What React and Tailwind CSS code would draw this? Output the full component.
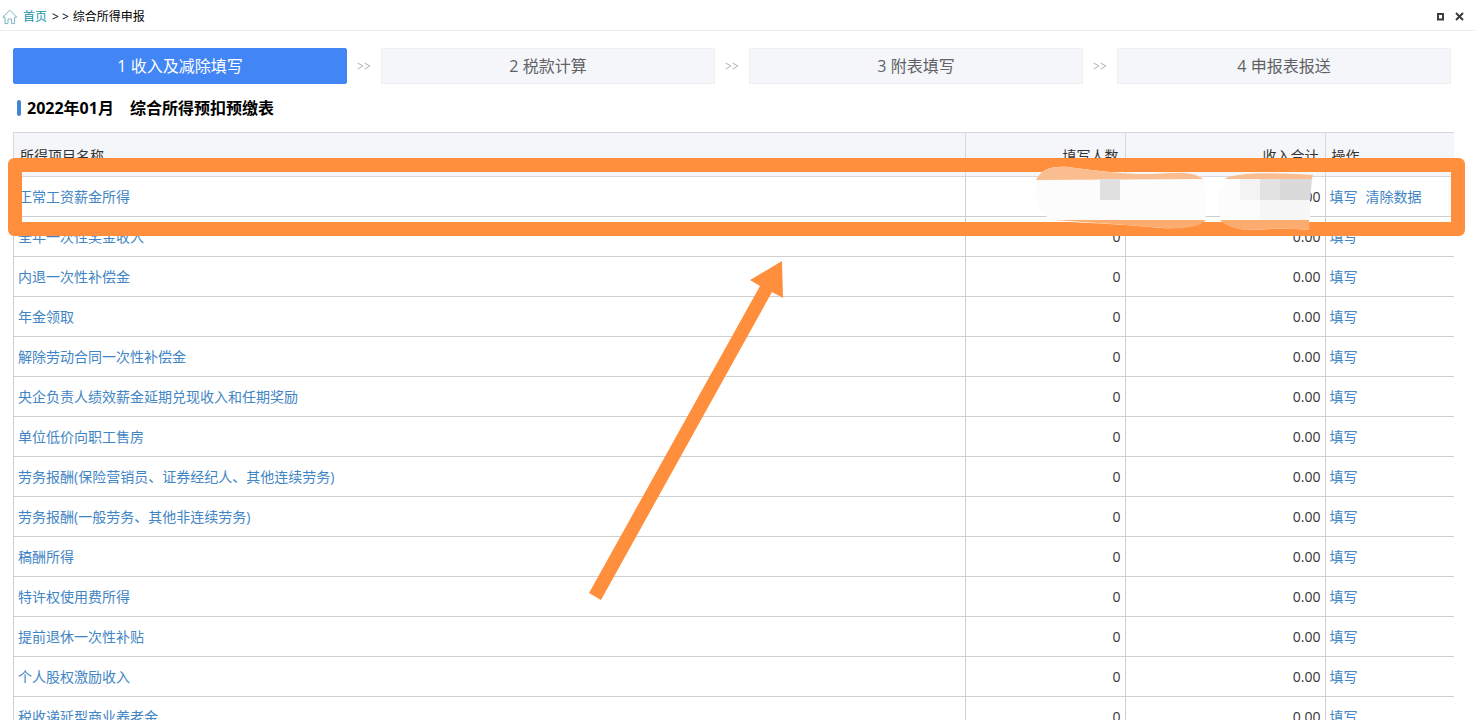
import React from "react";

const steps = ["1 收入及减除填写", "2 税款计算", "3 附表填写", "4 申报表报送"];

const rows = [
  { name: "正常工资薪金所得", count: "", total: "0.00", clear: true },
  { name: "全年一次性奖金收入", count: "0", total: "0.00" },
  { name: "内退一次性补偿金", count: "0", total: "0.00" },
  { name: "年金领取", count: "0", total: "0.00" },
  { name: "解除劳动合同一次性补偿金", count: "0", total: "0.00" },
  { name: "央企负责人绩效薪金延期兑现收入和任期奖励", count: "0", total: "0.00" },
  { name: "单位低价向职工售房", count: "0", total: "0.00" },
  { name: "劳务报酬(保险营销员、证券经纪人、其他连续劳务)", count: "0", total: "0.00" },
  { name: "劳务报酬(一般劳务、其他非连续劳务)", count: "0", total: "0.00" },
  { name: "稿酬所得", count: "0", total: "0.00" },
  { name: "特许权使用费所得", count: "0", total: "0.00" },
  { name: "提前退休一次性补贴", count: "0", total: "0.00" },
  { name: "个人股权激励收入", count: "0", total: "0.00" },
  { name: "税收递延型商业养老金", count: "0", total: "0.00" },
];

const TopBar = () => {
  return (
    <header className="flex h-[31px] shrink-0 items-center justify-between border-b border-[#ececf0] pt-[3px] pl-[2px] pr-[11px] text-[12px] text-black">
      <nav className="flex items-center">
        <svg width="16" height="16" viewBox="0 0 16 16" fill="none" stroke="#7fb2c4" strokeLinejoin="round">
          <path d="M0.8 8.2 L7.7 1.2 L14.8 8.2 L12.6 8.2 V14.6 H9.6 V10 H6 V14.6 H3 V8.2 Z" />
        </svg>
        <a href="#" className="ml-[5px] text-[#1493a8]">首页</a>
        <span className="ml-[5px] mr-1">&gt; &gt;</span>
        <span>综合所得申报</span>
      </nav>
      <div className="flex items-center gap-[10px]">
        <button type="button" aria-label="最大化">
          <svg width="9" height="9" viewBox="0 0 9 9" fill="none" stroke="#3c3c3c" strokeWidth="2">
            <path d="M2 2 H7 V7.5 H2 Z" />
          </svg>
        </button>
        <button type="button" aria-label="关闭">
          <svg width="9" height="9" viewBox="0 0 9 9" fill="none" stroke="#3c3c3c" strokeWidth="2">
            <path d="M1 1 L8 8 M8 1 L1 8" />
          </svg>
        </button>
      </div>
    </header>
  );
};

const Steps = () => {
  return (
    <ol className="flex items-center pr-[3px]">
      {steps.map((step, index) => (
        <React.Fragment key={step}>
          {index > 0 && (
            <li aria-hidden="true" className="flex w-[34px] justify-center">
              <svg width="14" height="8" viewBox="0 0 14 8" fill="none" stroke="#b4b4b8">
                <path d="M0.5 1 L6 4 L0.5 7 M7.5 1 L13 4 L7.5 7" />
              </svg>
            </li>
          )}
          <li
            className={
              index === 0
                ? "flex h-9 flex-1 items-center justify-center rounded-[2px] border border-[#4285f4] bg-[#4285f4] text-[16px] text-white"
                : "flex h-9 flex-1 items-center justify-center border border-[#eeeff3] bg-[#f4f6fa] text-[16px] text-[#606266]"
            }
          >
            {step}
          </li>
        </React.Fragment>
      ))}
    </ol>
  );
};

const IncomeTable = () => {
  return (
    <table className="w-full table-fixed border-collapse text-[14px] leading-5 text-[#333]">
      <colgroup>
        <col />
        <col className="w-[160px]" />
        <col className="w-[200px]" />
        <col className="w-[129px]" />
      </colgroup>
      <thead>
        <tr className="h-11 bg-[#f4f6f9]">
          <th className="border border-[#d8d8dc] px-[6px] pt-0.5 text-left font-normal">所得项目名称</th>
          <th className="border border-[#d8d8dc] px-[6px] pt-0.5 text-right font-normal">填写人数</th>
          <th className="border border-[#d8d8dc] px-[6px] pt-0.5 text-right font-normal">收入合计</th>
          <th className="border-y border-l border-[#d8d8dc] px-[6px] pt-0.5 text-left font-normal">操作</th>
        </tr>
      </thead>
      <tbody>
        {rows.map((row) => (
          <tr key={row.name} className="h-10">
            <td className="border border-[#cfcfcf] px-1">
              <a href="#" className="text-[#4285c4]">{row.name}</a>
            </td>
            <td className="border border-[#cfcfcf] px-1 text-right">{row.count}</td>
            <td className="border border-[#cfcfcf] px-1 text-right">{row.total}</td>
            <td className="border-y border-l border-[#cfcfcf] px-1">
              <button type="button" className="text-[#4285c4]">填写</button>
              {row.clear && (
                <button type="button" className="ml-2 text-[#4285c4]">清除数据</button>
              )}
            </td>
          </tr>
        ))}
      </tbody>
    </table>
  );
};

// highlight frame, blurred-out figures and arrow laid over the table
const Markup = () => {
  return (
    <div aria-hidden="true" className="pointer-events-none">
      <div className="absolute top-[26px] -right-[11px] -left-[5px] h-[78px] rounded-[6px] border-[14px] border-[#ff8f3c]" />
      <svg className="absolute top-8 right-[140px]" width="280" height="68" viewBox="0 0 280 68">
        <path
          d="M2 16 C8 4 20 2 34 3 C56 6 80 9 104 10 C128 11 156 4 170 15 L172 52 C164 62 150 65 128 64 C98 61 60 59 36 58 C18 57 6 52 3 40 Z"
          fill="#fcfcfc"
        />
        <path d="M185 28 C190 18 202 9 220 9 C240 8 260 10 279 11 L276 28 L275 66 C252 64 230 65 214 66 C198 65 184 56 183 44 Z" fill="#fcfcfc" />
        <path d="M2 16 C8 4 20 2 34 3 C56 6 80 9 104 10 C128 11 156 4 169 15 Z" fill="#fabd90" />
        <path d="M20 56 H172 C164 64 150 65 128 64 C98 61 60 59 20 56 Z" fill="#fdac70" />
        <path d="M190 15 C202 9 228 8 279 11 L278 15 Z" fill="#fabd90" />
        <path d="M186 56 H275 V66 C252 64 230 65 214 66 C202 66 190 61 186 56 Z" fill="#fdac70" />
        <rect x="66" y="15" width="20" height="21" fill="#e0e0e0" />
        <rect x="206" y="15" width="20" height="21" fill="#f3f3f3" />
        <rect x="226" y="15" width="20" height="21" fill="#e2e2e2" />
        <path d="M246 15 H278 L276 36 H246 Z" fill="#dadada" />
        <rect x="226" y="36" width="50" height="20" fill="#f7f7f7" />
      </svg>
      <svg className="absolute top-32 left-[39%]" width="210" height="344" viewBox="0 0 210 344">
        <path d="M207 1 L175 20 L185 26 L14 333 L26 340 L197 32 L208 38 Z" fill="#ff8f3c" />
      </svg>
    </div>
  );
};

const App = () => {
  return (
    <div className="flex h-screen flex-col overflow-hidden bg-white font-['Open_Sans','Noto_Sans_CJK_SC',sans-serif]">
      <TopBar />
      <main className="min-h-0 flex-1 pt-[17px] pr-[21px] pl-[13px]">
        <Steps />
        <h1 className="flex h-12 items-center pl-1 text-[16px] font-bold text-black">
          <span className="mr-[6px] h-4 w-1 rounded-[2px] bg-[#4285d4]" />
          <span className="mr-4">2022年01月</span>
          <span>综合所得预扣预缴表</span>
        </h1>
        <div className="relative">
          <IncomeTable />
          <Markup />
        </div>
      </main>
    </div>
  );
};

export default App;
